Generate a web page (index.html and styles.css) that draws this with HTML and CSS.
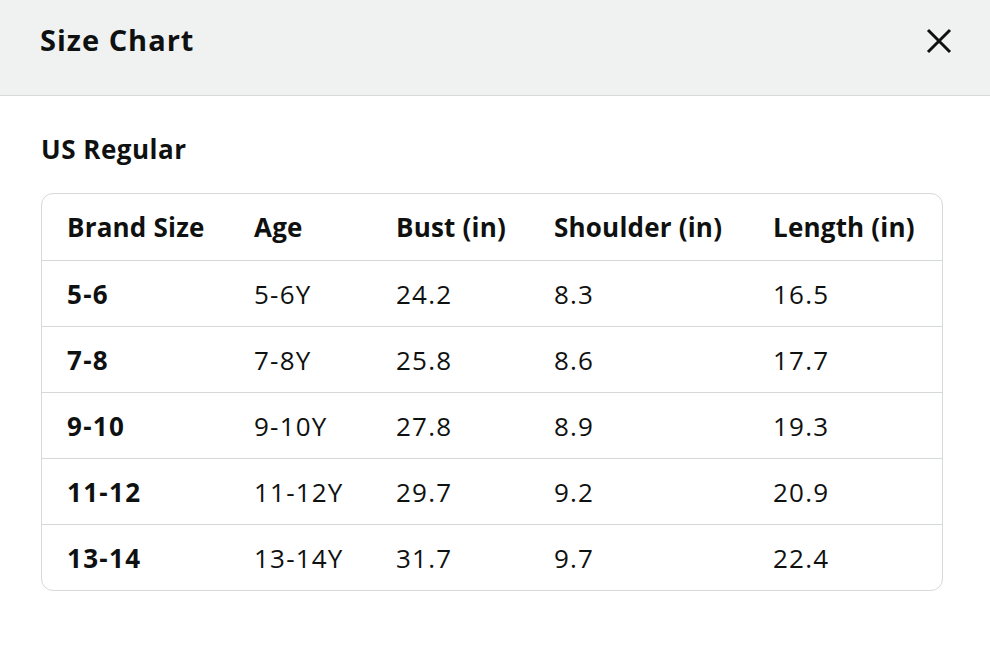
FILE: index.html
```html
<!DOCTYPE html>
<html>
<head>
<meta charset="utf-8">
<link rel="stylesheet" href="styles.css">
</head>
<body>
<div class="modal">
  <header class="modal-header">
    <h1 class="modal-title">Size Chart</h1>
    <button class="close-btn" aria-label="Close">
      <svg width="26" height="26" viewBox="0 0 26 26"><path d="M2 2 L24 24 M24 2 L2 24" stroke="#0f1111" stroke-width="3" fill="none"/></svg>
    </button>
  </header>
  <section class="modal-body">
    <h2 class="section-title">US Regular</h2>
    <div class="table-wrap">
      <table class="size-table">
        <colgroup>
          <col class="c1"><col class="c2"><col class="c3"><col class="c4"><col class="c5">
        </colgroup>
        <thead>
          <tr><th>Brand Size</th><th>Age</th><th>Bust (in)</th><th>Shoulder (in)</th><th>Length (in)</th></tr>
        </thead>
        <tbody>
          <tr><th>5-6</th><td>5-6Y</td><td>24.2</td><td>8.3</td><td>16.5</td></tr>
          <tr><th>7-8</th><td>7-8Y</td><td>25.8</td><td>8.6</td><td>17.7</td></tr>
          <tr><th>9-10</th><td>9-10Y</td><td>27.8</td><td>8.9</td><td>19.3</td></tr>
          <tr><th>11-12</th><td>11-12Y</td><td>29.7</td><td>9.2</td><td>20.9</td></tr>
          <tr><th>13-14</th><td>13-14Y</td><td>31.7</td><td>9.7</td><td>22.4</td></tr>
        </tbody>
      </table>
    </div>
  </section>
</div>
</body>
</html>
```
FILE: styles.css
```css
html, body {
  margin: 0;
  padding: 0;
  background: #ffffff;
  font-family: "Open Sans", "Noto Sans", sans-serif;
  color: #0f1111;
}
.modal {
  width: 990px;
}
.modal-header {
  height: 95px;
  background: #f0f2f2;
  border-bottom: 1px solid #d5d9d9;
  display: flex;
  align-items: center;
  justify-content: space-between;
  padding: 0 38px 0 40px;
  box-sizing: content-box;
}
.modal-title {
  margin: 0;
  font-size: 29px;
  font-weight: 700;
  line-height: 1;
  margin-top: -17px;
  letter-spacing: 1px;
}
.close-btn {
  border: 0;
  background: none;
  padding: 0;
  width: 26px;
  height: 26px;
  margin-top: -14px;
  display: flex;
}
.modal-body {
  padding: 36px 47px 0 41px;
}
.section-title {
  margin: 0 0 27px 0;
  font-size: 26px;
  font-weight: 700;
  line-height: 34px;
  letter-spacing: 0.5px;
}
.table-wrap {
  border: 1px solid #d5d9d9;
  border-radius: 12px;
  overflow: hidden;
}
.size-table {
  width: 100%;
  border-collapse: collapse;
  font-size: 26px;
  table-layout: fixed;
}
.c1 { width: 187px; }
.c2 { width: 142px; }
.c3 { width: 158px; }
.c4 { width: 219px; }
.size-table th, .size-table td {
  text-align: left;
  padding: 0 0 0 25px;
  height: 65px;
  line-height: 32px;
  white-space: nowrap;
}
.size-table td {
  font-weight: 400;
  letter-spacing: 1.2px;
}
.size-table th { font-weight: 700; }
.size-table thead th { height: 66px; letter-spacing: 0.2px; }
.size-table tbody th { letter-spacing: 1.3px; }
.size-table tbody th, .size-table tbody td {
  border-top: 1px solid #d5d9d9;
}
```
